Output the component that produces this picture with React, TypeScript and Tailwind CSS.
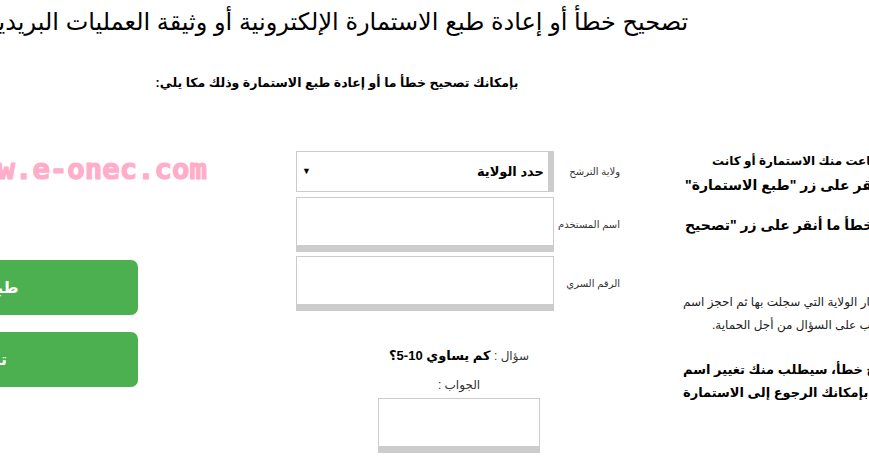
import React from "react";

const font = { fontFamily: "'Liberation Sans', 'DejaVu Sans', sans-serif" };

function Field({ label, children }: { label: string; children: React.ReactNode }) {
  return (
    <div className="flex items-center">
      <div className="w-[68px] whitespace-nowrap pr-[2px] text-[10px] text-[#333]">{label}</div>
      {children}
    </div>
  );
}

function Line({ pad, className, children }: { pad: string; className: string; children: React.ReactNode }) {
  return (
    <div className={`flex justify-end ${pad}`}>
      <span className={`whitespace-nowrap ${className}`}>{children}</span>
    </div>
  );
}

export default function App() {
  return (
    <div className="h-[456px] w-[869px] overflow-hidden bg-white text-black" style={font}>
      <div dir="rtl" className="ml-[-213px] w-[1100px]">
        <h1 className="pt-[4px] text-center text-[24px] leading-[36px] font-normal">
          تصحيح خطأ أو إعادة طبع الاستمارة الإلكترونية أو وثيقة العمليات البريدية
        </h1>
        <p className="mt-[33px] text-center text-[12.5px] font-bold leading-[20px]">
          بإمكانك تصحيح خطأ ما أو إعادة طبع الاستمارة وذلك مكا يلي:
        </p>

        <div className="mt-[56px] flex items-start">
          {/* right column: instructions */}
          <div className="w-[204px] pt-[2px]">
            <Line pad="pl-[29px]" className="text-[12px] font-bold leading-[20px]">
              إذا سجلت في الموقع وضاعت منك الاستمارة أو كانت
            </Line>
            <Line pad="pl-[2px] mt-[2px]" className="text-[14px] font-bold leading-[24px]">
              تالفة انقر على زر "طبع الاستمارة"
            </Line>
            <Line pad="pl-[2px] mt-[16px]" className="text-[14px] font-bold leading-[24px]">
              أما إذا اكتشفت خطأ ما أنقر على زر "تصحيح
            </Line>
            <Line pad="pl-0 mt-[54px]" className="text-[12px] text-[#222] leading-[23px]">
              عليك اختيار الولاية التي سجلت بها ثم احجز اسم
            </Line>
            <Line pad="pl-[29px]" className="text-[12px] text-[#222] leading-[23px]">
              المستخدم والرقم السري، وأجب على السؤال من أجل الحماية.
            </Line>
            <Line pad="pl-0 mt-[21px]" className="text-[13px] font-bold leading-[23px]">
              عند الضغط على زر تصحيح خطأ، سيطلب منك تغيير اسم
            </Line>
            <Line pad="pl-0" className="text-[13px] font-bold leading-[23px]">
              المستخدم بعد التسجيل، أي بإمكانك الرجوع إلى الاستمارة
            </Line>
          </div>

          {/* middle column: form */}
          <div className="mr-[61px] flex w-[326px] flex-col pt-[2px]">
            <Field label="ولاية الترشح">
              <div className="flex h-[41px] w-[258px] items-center justify-between border border-r-[6px] border-[#ccc] pr-[4px] pl-[5px]">
                <span className="text-[13px] font-bold">حدد الولاية</span>
                <span className="text-[9px]">▼</span>
              </div>
            </Field>
            <div className="mt-[5px]">
              <Field label="اسم المستخدم">
                <div className="h-[55px] w-[258px] border border-b-[7px] border-[#ccc]" />
              </Field>
            </div>
            <div className="mt-[4px]">
              <Field label="الرقم السري">
                <div className="h-[55px] w-[258px] border border-b-[7px] border-[#ccc]" />
              </Field>
            </div>
            <div className="mt-[36px] flex flex-col items-center">
              <div className="text-[12px] leading-[18px] text-[#333]">
                سؤال : <b className="text-[13px] text-black">كم يساوي 10-5؟</b>
              </div>
              <div className="mt-[11px] text-[12px] leading-[18px] text-[#333]">الجواب :</div>
              <div className="mt-[4px] h-[55px] w-[162px] border border-b-[7px] border-[#ccc]" />
            </div>
          </div>

          {/* left column: watermark and buttons */}
          <div className="flex w-[509px] flex-col">
            <div
              dir="ltr"
              className="mr-[89px] mt-[2px] text-right text-[29px] font-bold leading-[36px] text-[#ffadc8] [-webkit-text-stroke:1.2px_#ffadc8]"
              style={{ fontFamily: "'DejaVu Sans Mono', monospace" }}
            >
              www.e-onec.com
            </div>
            <button className="mt-[73px] mr-auto h-[55px] w-[351px] rounded-[7px] bg-[#4caf50] text-[16px] font-bold text-white">
              طبع الاستمارة
            </button>
            <button className="mt-[17px] mr-auto h-[55px] w-[351px] rounded-[7px] bg-[#4caf50] text-[16px] font-bold text-white">
              تصحيح خطأ
            </button>
          </div>
        </div>
      </div>
    </div>
  );
}
